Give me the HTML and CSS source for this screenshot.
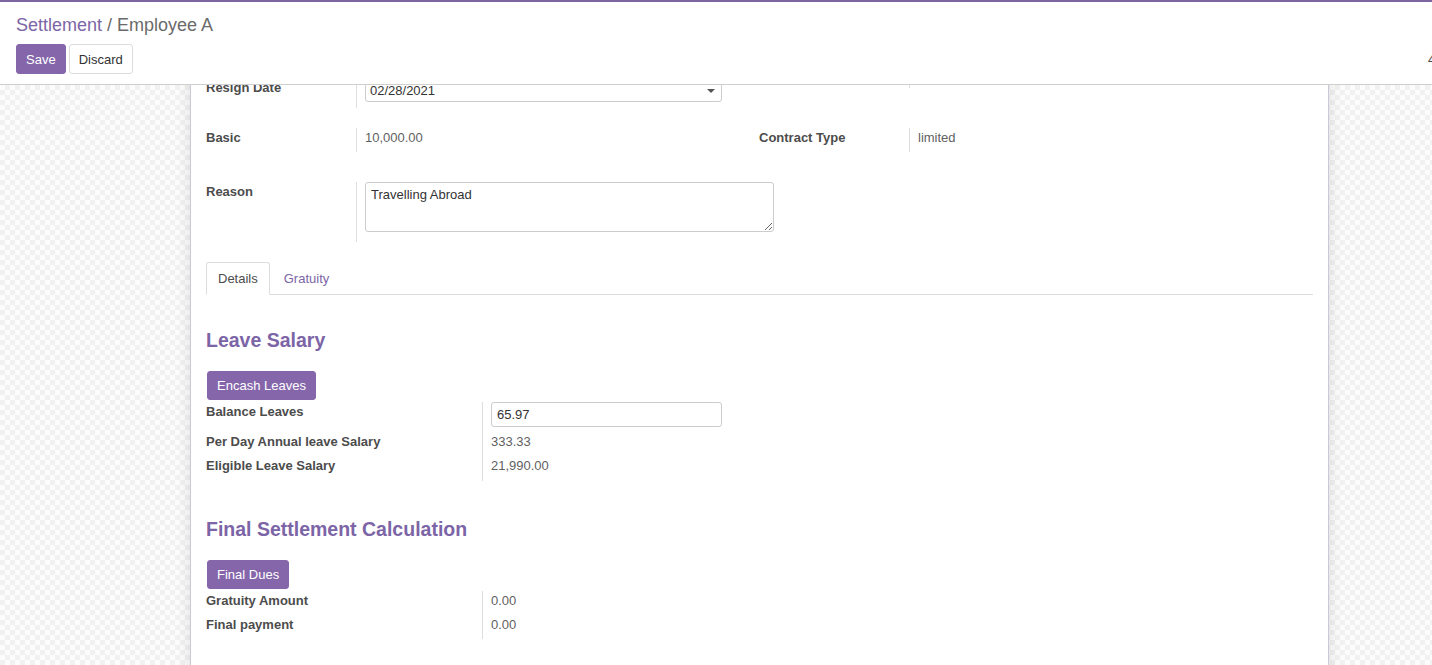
FILE: index.html
```html
<!DOCTYPE html>
<html lang="en">
<head>
<meta charset="utf-8">
<title>Settlement / Employee A</title>
<link rel="stylesheet" href="styles.css">
</head>
<body>
<div class="topline"></div>
<header class="cp">
  <div class="crumbs"><span class="crumb-link">Settlement</span><span class="crumb-sep"> / </span><span class="crumb-cur">Employee A</span></div>
  <div class="cp-row">
    <div class="btns">
      <button class="btn btn-primary btn-save">Save</button>
      <button class="btn btn-secondary">Discard</button>
    </div>
    <div class="pager">4 / 4</div>
  </div>
</header>
<main class="view">
  <div class="sheet">
    <div class="pair r1">
      <div class="half">
        <div class="lbl lbl-pad">Resign Date</div>
        <div class="val val-input">
          <div class="date-input"><span>02/28/2021</span><span class="caret"></span></div>
        </div>
      </div>
      <div class="half">
        <div class="lbl"></div>
        <div class="val val-short"></div>
      </div>
    </div>
    <div class="pair r2">
      <div class="half">
        <div class="lbl">Basic</div>
        <div class="val val-text">10,000.00</div>
      </div>
      <div class="half">
        <div class="lbl">Contract Type</div>
        <div class="val val-text">limited</div>
      </div>
    </div>
    <div class="pair r3">
      <div class="half">
        <div class="lbl">Reason</div>
        <div class="val val-area"><textarea class="area" readonly>Travelling Abroad</textarea></div>
      </div>
    </div>

    <nav class="tabs">
      <div class="tab active">Details</div>
      <div class="tab">Gratuity</div>
    </nav>

    <section class="pane">
      <h2 class="sec-title first">Leave Salary</h2>
      <button class="btn btn-primary btn-action">Encash Leaves</button>
      <div class="grid2">
        <div class="lbl">Balance Leaves</div>
        <div class="val val-input2"><div class="num-input">65.97</div></div>
        <div class="lbl">Per Day Annual leave Salary</div>
        <div class="val val-text">333.33</div>
        <div class="lbl">Eligible Leave Salary</div>
        <div class="val val-text val-last">21,990.00</div>
      </div>

      <h2 class="sec-title second">Final Settlement Calculation</h2>
      <button class="btn btn-primary btn-action">Final Dues</button>
      <div class="grid2">
        <div class="lbl">Gratuity Amount</div>
        <div class="val val-text">0.00</div>
        <div class="lbl">Final payment</div>
        <div class="val val-text">0.00</div>
      </div>
    </section>
    <div class="sheet-end"></div>
  </div>
</main>
</body>
</html>
```

FILE: styles.css
```css
* { box-sizing: border-box; }

html, body {
  margin: 0;
  padding: 0;
  height: 665px;
  overflow: hidden;
}

body {
  font-family: "Liberation Sans", Arial, sans-serif;
  font-size: 13px;
  color: #4c4c4c;
  background: #fff;
}

.topline {
  height: 2px;
  background: #7d649f;
}

/* control panel */
.cp {
  height: 83px;
  padding: 0 16px;
  background: #fff;
  border-bottom: 1px solid #cfcfcf;
  overflow: hidden;
}

.crumbs {
  margin-top: 11px;
  height: 25px;
  line-height: 25px;
  font-size: 18px;
  white-space: nowrap;
}

.crumb-link { color: #7c65a6; }
.crumb-sep, .crumb-cur { color: #6a6a6a; }

.cp-row {
  margin-top: 6px;
  display: flex;
  align-items: center;
}

.btns {
  display: flex;
  gap: 3px;
  flex: 1;
}

.btn {
  font-family: "Liberation Sans", Arial, sans-serif;
  font-size: 13px;
  height: 30px;
  line-height: 27px;
  padding: 1px 10px 0;
  border-radius: 3px;
  border: 1px solid transparent;
  cursor: pointer;
}

.btn-primary {
  background: #8566ab;
  border-color: #8566ab;
  color: #fff;
}

.btn-save { padding: 1px 9px 0; }

.btn-secondary {
  background: #fff;
  border-color: #dcdcdc;
  color: #333;
  padding: 1px 9px 0;
}

.pager {
  width: 40px;
  margin-right: -52px;
  white-space: nowrap;
  color: #4c4c4c;
}

/* main view */
.view {
  height: 580px;
  overflow: hidden;
  padding-left: 190px;
  background-color: #f9f9f9;
  background-image: repeating-conic-gradient(#f1f1f1 0 25%, #fcfcfc 0 50%);
  background-size: 10px 10px;
}

.sheet {
  width: 1139px;
  margin-top: -12px;
  padding: 0 15px;
  background: #fff;
  border: 1px solid #cbc8d8;
  box-shadow: 0 0 14px rgba(0, 0, 0, 0.12);
}

.pair {
  display: flex;
}

.half {
  width: 553px;
  display: grid;
  grid-template-columns: 150px 1fr;
  align-items: start;
}

.lbl {
  font-weight: bold;
  line-height: 20px;
  color: #4c4c4c;
}

.lbl-pad { padding-top: 4px; }

.val {
  border-left: 1px solid #dedede;
  padding-left: 8px;
  color: #5f5f5f;
  line-height: 20px;
}

.val-input { padding-top: 4px; padding-bottom: 6px; }
.val-short { height: 14px; }
.val-text { padding-bottom: 4px; }
.val-last { padding-bottom: 5px; }
.val-area { padding-bottom: 10px; }
.val-input2 { padding-bottom: 5px; }

.r2 { margin-top: 20px; }
.r3 { margin-top: 30px; }

.date-input {
  width: 357px;
  height: 24px;
  border: 1px solid #cccccc;
  border-radius: 3px;
  padding: 1px 6px 0 4px;
  display: flex;
  align-items: center;
  justify-content: space-between;
  color: #333;
  line-height: 21px;
}

.caret {
  width: 0;
  height: 0;
  border-left: 4px solid transparent;
  border-right: 4px solid transparent;
  border-top: 4px solid #555;
}

.area {
  display: block;
  width: 409px;
  height: 50px;
  margin: 0;
  border: 1px solid #cccccc;
  border-radius: 3px;
  padding: 3px 5px;
  font-family: "Liberation Sans", Arial, sans-serif;
  font-size: 13px;
  line-height: 18px;
  color: #333;
  resize: both;
  outline: none;
}

/* tabs */
.tabs {
  margin-top: 20px;
  display: flex;
  border-bottom: 1px solid #dddddd;
}

.tab {
  padding: 6px 11px;
  line-height: 19px;
  margin-bottom: -1px;
  margin-right: 2px;
  border: 1px solid transparent;
  border-radius: 3px 3px 0 0;
  color: #7c65a6;
}

.tab.active {
  background: #fff;
  border-color: #dddddd #dddddd transparent;
  color: #4c4c4c;
}

/* pane */
.sec-title {
  margin: 0;
  font-size: 19.5px;
  line-height: 24px;
  font-weight: bold;
  color: #7c65a6;
}

.sec-title.first { margin-top: 33px; }
.sec-title.second { margin-top: 36px; }

.btn-action {
  display: block;
  margin-top: 19px;
  height: 29px;
  line-height: 26px;
  padding: 1px 9px 0;
  margin-left: 1px;
}

.grid2 {
  margin-top: 2px;
  display: grid;
  grid-template-columns: 276px 1fr;
  align-items: stretch;
}

.num-input {
  width: 231px;
  height: 25px;
  border: 1px solid #cccccc;
  border-radius: 3px;
  padding: 1px 5px 0;
  line-height: 22px;
  color: #333;
}

.sheet-end { height: 80px; }
```
